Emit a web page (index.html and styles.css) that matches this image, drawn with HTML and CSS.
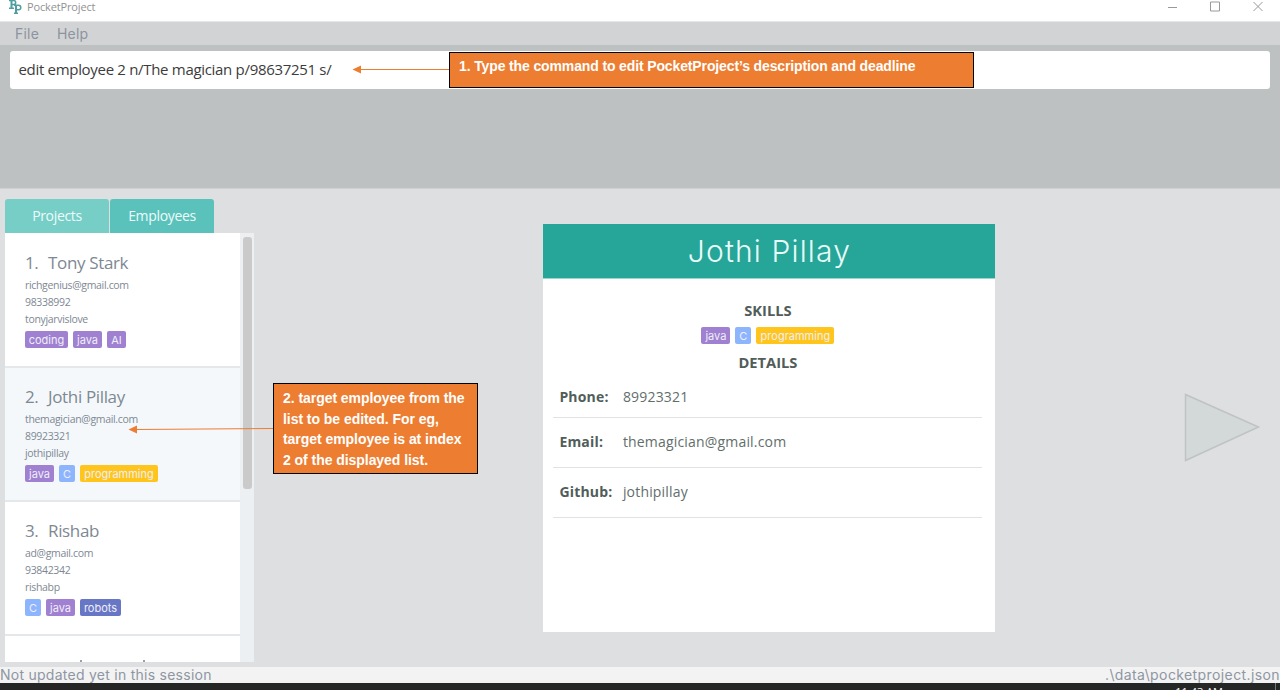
FILE: index.html
```html
<!DOCTYPE html>
<html lang="en">
<head>
<meta charset="utf-8">
<title>PocketProject</title>
<link rel="stylesheet" href="styles.css">
</head>
<body>
<div class="window">
  <header class="titlebar">
    <svg class="logo" width="13" height="15" viewBox="0 0 13 15" fill="none" stroke="#4f9fa0"><path stroke-width="2" d="M2.5 0v8M7 5v8"/><path stroke-width="1.5" d="M0 8.3h5M0 .5h4.5q2.200 0 2.200 2t-2.200 2H3M5 13.300h4M5 5.200h4.500q2.300 0 2.300 2.300t-2.300 2.300H7.500"/></svg>
    <span class="app-name">PocketProject</span>
    <svg class="controls" width="98" height="14" viewBox="0 0 98 14" fill="none" stroke="#999"><path d="M1 7.500h9"/><path d="M43.500 2h9v9h-9zM86.500 2l9 9m0-9l-9 9"/></svg>
  </header>
  <nav class="menu"><span>File</span><span>Help</span></nav>
  <section class="command"><div class="input"><span>edit employee 2 n/The magician p/98637251 s/</span></div></section>
  <main class="content">
    <aside class="sidebar">
      <div class="tabs"><div class="tab">Projects</div><div class="tab active">Employees</div></div>
      <div class="list">
        <div class="items">
          <article class="item">
            <h2><span>1.</span><span>Tony Stark</span></h2>
            <p>richgenius@gmail.com</p><p>98338992</p><p>tonyjarvislove</p>
            <div class="tags"><span class="tag purple w-coding">coding</span><span class="tag purple w-java">java</span><span class="tag purple w-ai">AI</span></div>
          </article>
          <article class="item selected">
            <h2><span>2.</span><span>Jothi Pillay</span></h2>
            <p>themagician@gmail.com</p><p>89923321</p><p>jothipillay</p>
            <div class="tags"><span class="tag purple w-java">java</span><span class="tag blue w-c">C</span><span class="tag yellow w-prog">programming</span></div>
          </article>
          <article class="item">
            <h2><span>3.</span><span>Rishab</span></h2>
            <p>ad@gmail.com</p><p>93842342</p><p>rishabp</p>
            <div class="tags"><span class="tag blue w-c">C</span><span class="tag purple w-java">java</span><span class="tag indigo w-robots">robots</span></div>
          </article>
          <article class="item next"><i></i><i></i></article>
        </div>
        <div class="scroll"><div class="thumb"></div></div>
      </div>
    </aside>
    <section class="card">
      <h1>Jothi Pillay</h1>
      <div class="card-body">
        <h3>SKILLS</h3>
        <div class="tags"><span class="tag purple w-java">java</span><span class="tag blue w-c">C</span><span class="tag yellow w-prog">programming</span></div>
        <h3>DETAILS</h3>
        <dl>
          <div class="row first"><dt>Phone:</dt><dd>89923321</dd></div>
          <div class="row"><dt>Email:</dt><dd>themagician@gmail.com</dd></div>
          <div class="row"><dt>Github:</dt><dd>jothipillay</dd></div>
        </dl>
      </div>
    </section>
    <svg class="play" width="78" height="72" viewBox="0 0 78 72"><path d="M2.500 2.500v66L75.500 35z" fill="#d3d8d9" stroke="#c0c2c4" stroke-width="1.500"/></svg>
  </main>
  <footer class="status"><span>Not updated yet in this session</span><span class="path">.\data\pocketproject.json</span></footer>
  <div class="taskbar"><span>11:43 AM</span><i></i></div>
  <svg class="arrows" width="460" height="440" viewBox="0 0 460 440"><path d="M360 69.500h89M136 429.500L273 428.500" stroke="#ed7d31" fill="none"/><path d="M352.500 69.500l8.500-4v8zM128.500 429.500l8.500-4v8z" fill="#ed7d31"/></svg>
  <div class="note note-one"><span>1. Type the command to edit PocketProject’s description and deadline</span></div>
  <div class="note note-two"><span>2. target employee from the</span><span>list to be edited. For eg,</span><span>target employee is at index</span><span>2 of the displayed list.</span></div>
</div>
</body>
</html>
```
FILE: styles.css
```css
* { box-sizing: border-box; }
body { margin: 0; background: #fff; font-family: "Open Sans", "Noto Sans", sans-serif; }
h1, h2, h3, p, dl, dt, dd { margin: 0; font-weight: 400; }
span, p, dt, dd { white-space: nowrap; }
.window { position: relative; width: 1280px; height: 690px; display: flex; flex-direction: column; overflow: hidden; }
.titlebar { height: 22px; flex: none; display: flex; align-items: flex-start; padding-left: 9px; border-bottom: 1px solid #e6e7e8; }
.app-name { margin-left: 5px; font-size: 11px; line-height: 14px; color: #929292; letter-spacing: -.15px; }
.controls { margin-left: auto; margin-right: 15px; }
.menu { height: 23px; flex: none; display: flex; padding-left: 15px; gap: 18px; background: #d2d3d5; font: 14px/23px Inter, sans-serif; letter-spacing: .2px; color: #8c949f; }
.command { height: 144px; flex: none; background: #bdc1c2; padding: 6px 10px; border-bottom: 1px solid #cfd1d2; }
.input { height: 38px; background: #fff; border-radius: 3px; padding-left: 8.500px; font-size: 15px; line-height: 37px; letter-spacing: -.31px; color: #3c3c3c; }
.content { height: 478px; flex: none; background: #dedfe1; display: flex; align-items: flex-start; }
.sidebar { width: 249px; margin: 10px 0 0 5px; }
.tabs { display: flex; gap: 1px; height: 34px; }
.tab { width: 104px; background: #76cec7; border-radius: 3px 3px 0 0; color: #edfbfa; font-size: 14px; line-height: 34px; letter-spacing: -.33px; text-align: center; }
.tab.active { background: #5ac2bb; }
.list { display: flex; height: 429px; overflow: hidden; background: #edf0f3; }
.items { width: 235px; }
.item { height: 134px; padding: 17px 20px 0; background: #fff; border-bottom: 2px solid #e5e8ea; color: #7e8893; }
.item:first-child { height: 135px; padding-top: 18px; }
.item.selected { background: #f4f8fb; }
.item h2 { display: flex; gap: 9.500px; font-size: 17px; line-height: 24px; letter-spacing: -.35px; margin-bottom: 2px; }
.item p { font-size: 10.500px; line-height: 17px; letter-spacing: -.33px; }
.item .tags { margin-top: 3px; }
.tags { display: flex; gap: 5px; }
.tag { height: 17px; border-radius: 2px; color: #f0eef8; font: 11px/18px Inter, sans-serif; text-align: center; }
.purple { background: #9f80d1; }
.blue { background: #8db5fe; }
.yellow { background: #ffc51c; }
.indigo { background: #6877c5; }
.w-coding { width: 43px; }
.w-java { width: 29px; }
.w-ai { width: 19px; }
.w-c { width: 16px; }
.w-prog { width: 78px; }
.w-robots { width: 41px; }
.item.next { display: flex; padding: 24px 0 0 75px; gap: 61px; }
.next i { width: 2px; height: 2px; background: #99a0a8; }
.scroll { width: 14px; padding: 4px 2px 0 3px; }
.thumb { height: 252px; width: 9px; border-radius: 3px; background: #cacaca; }
.card { width: 452px; height: 408px; margin: 35px 0 0 289.400px; background: #fff; }
.card h1 { height: 55px; background: #26a599; border-bottom: 1px solid #9ad5cf; color: #e9fbf8; text-align: center; font: 300 30px/54px Inter, sans-serif; letter-spacing: 1.150px; }
.card-body { padding: 20px 13px 0 10px; }
.card h3 { font-size: 14.700px; font-weight: 700; line-height: 22px; color: #515d5a; text-align: center; }
.card .tags { justify-content: center; margin: 6px 0 7px; }
.row { height: 50px; display: flex; align-items: center; padding-bottom: 2px; border-bottom: 1px solid #e0e2e5; font-size: 14px; letter-spacing: .18px; color: #626e6b; }
.row.first { height: 45px; padding: 2px 0 0; }
.row dt { width: 69.500px; padding-left: 6px; font-weight: 700; color: #515d5a; }
.play { margin: 203px 0 0 188px; }
.status { height: 16px; flex: none; display: flex; justify-content: space-between; background: #f3f3f3; font: 14px/16px Inter, sans-serif; letter-spacing: .26px; color: #8e96a3; }
.path { letter-spacing: .4px; }
.taskbar { height: 8px; flex: none; background: #252626; overflow: hidden; display: flex; justify-content: flex-end; color: #fff; font: 11px/14px "Open Sans", sans-serif; }
.taskbar span { margin: 2px 52px 0 0; }
.taskbar i { width: 1px; background: #777; margin-right: 4px; }
.arrows { position: absolute; left: 0; top: 0; }
.note { position: absolute; background: #ed7d31; border: 1px solid #000; color: #fff; font: 700 14px/20.700px "Liberation Sans Narrow", "Liberation Sans", sans-serif; letter-spacing: -.05px; display: flex; flex-direction: column; align-items: flex-start; padding-left: 9px; }
.note-one { left: 449px; top: 52px; width: 525px; height: 36px; padding-top: 3px; letter-spacing: -.13px; }
.note-two { left: 273px; top: 383px; width: 205px; height: 91px; padding-top: 4px; }
```
